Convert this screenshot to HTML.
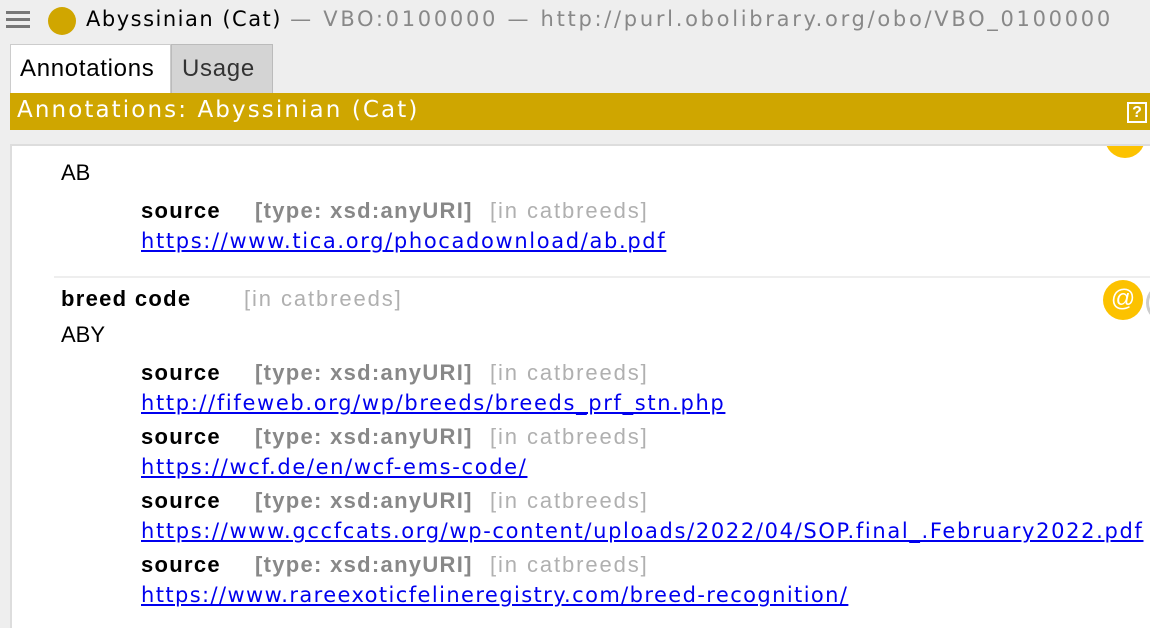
<!DOCTYPE html>
<html><head><meta charset="utf-8"><style>
body{margin:0;width:1150px;height:628px;overflow:hidden;background:#eeeeee;font-family:"Liberation Sans",sans-serif;position:relative}
.a{position:absolute;white-space:nowrap}
.t{font-family:"DejaVu Sans",sans-serif;font-size:21px;top:7px;letter-spacing:1.5px}
.lbl{font-size:22px;font-weight:bold;color:#000;letter-spacing:1.3px}
.ty{font-size:22px;font-weight:bold;color:#888;letter-spacing:1.3px}
.in{font-size:22px;color:#b0b0b0;letter-spacing:1.9px}
.lk{font-family:"DejaVu Sans",sans-serif;font-size:21px;color:#0000ee;text-decoration:underline;letter-spacing:1.65px}
.v{font-size:22px;color:#000}
</style></head><body>
<div class="a" style="left:6px;top:11px;width:24px;height:3px;background:#777;box-shadow:0 7px 0 #777,0 14px 0 #777"></div>
<div class="a" style="left:48px;top:7px;width:28px;height:28px;border-radius:50%;background:#d0a600"></div>
<div class="a t" style="left:86px;color:#000">Abyssinian (Cat) <span style="color:#888;letter-spacing:2.7px">— VBO:0100000 — http://purl.obolibrary.org/obo/VBO_0100000</span></div>
<div class="a" style="left:10px;top:44px;width:161px;height:49px;background:#fff;border:1px solid #ccc;border-bottom:none;box-sizing:border-box"></div>
<div class="a" style="left:20px;top:55px;font-size:24px;color:#000;letter-spacing:0.7px">Annotations</div>
<div class="a" style="left:171px;top:44px;width:102px;height:49px;background:#d4d4d4;border:1px solid #bbb;border-bottom:none;box-sizing:border-box"></div>
<div class="a" style="left:182px;top:55px;font-size:24px;color:#333;letter-spacing:0.7px">Usage</div>
<div class="a" style="left:10px;top:93px;width:1140px;height:37px;background:#cfa600"></div>
<div class="a" style="left:17px;top:97px;font-family:'DejaVu Sans',sans-serif;font-size:23px;color:#fff;letter-spacing:2.1px">Annotations: Abyssinian (Cat)</div>
<div class="a" style="left:1127px;top:102px;width:20px;height:21px;border:2px solid #fff;box-sizing:border-box;color:#fff;font-size:16px;font-weight:bold;text-align:center;line-height:17px">?</div>
<div class="a" style="left:10px;top:144px;width:1140px;height:484px;background:#fff;border-top:2px solid #ddd;border-left:2px solid #ddd;box-sizing:border-box;overflow:hidden">
<div class="a" style="left:1093px;top:-28px;width:40px;height:40px;border-radius:50%;background:#fcc200"></div>
</div>
<div class="a v" style="left:61px;top:160px">AB</div>
<div class="a lbl" style="left:141px;top:198px">source</div>
<div class="a ty" style="left:255px;top:198px">[type: xsd:anyURI]</div>
<div class="a in" style="left:490px;top:198px">[in catbreeds]</div>
<div class="a lk" style="left:141px;top:229px">https://www.tica.org/phocadownload/ab.pdf</div>
<div class="a" style="left:54px;top:276px;width:1096px;height:2px;background:#eee"></div>
<div class="a lbl" style="left:61px;top:286px">breed code</div>
<div class="a in" style="left:244px;top:286px">[in catbreeds]</div>
<div class="a" style="left:1103px;top:280px;width:40px;height:40px;border-radius:50%;background:#fcc200;color:#fff;font-size:24px;text-align:center;line-height:38px">@</div>
<div class="a" style="left:1146px;top:284px;width:30px;height:32px;border-radius:50%;border:3px solid #ccc"></div>
<div class="a v" style="left:61px;top:322px">ABY</div>
<div class="a lbl" style="left:141px;top:360px">source</div><div class="a ty" style="left:255px;top:360px">[type: xsd:anyURI]</div><div class="a in" style="left:490px;top:360px">[in catbreeds]</div>
<div class="a lk" style="left:141px;top:391px">http://fifeweb.org/wp/breeds/breeds_prf_stn.php</div>
<div class="a lbl" style="left:141px;top:424px">source</div><div class="a ty" style="left:255px;top:424px">[type: xsd:anyURI]</div><div class="a in" style="left:490px;top:424px">[in catbreeds]</div>
<div class="a lk" style="left:141px;top:455px">https://wcf.de/en/wcf-ems-code/</div>
<div class="a lbl" style="left:141px;top:488px">source</div><div class="a ty" style="left:255px;top:488px">[type: xsd:anyURI]</div><div class="a in" style="left:490px;top:488px">[in catbreeds]</div>
<div class="a lk" style="left:141px;top:519px">https://www.gccfcats.org/wp-content/uploads/2022/04/SOP.final_.February2022.pdf</div>
<div class="a lbl" style="left:141px;top:552px">source</div><div class="a ty" style="left:255px;top:552px">[type: xsd:anyURI]</div><div class="a in" style="left:490px;top:552px">[in catbreeds]</div>
<div class="a lk" style="left:141px;top:583px;letter-spacing:1.4px">https://www.rareexoticfelineregistry.com/breed-recognition/</div>
</body></html>
